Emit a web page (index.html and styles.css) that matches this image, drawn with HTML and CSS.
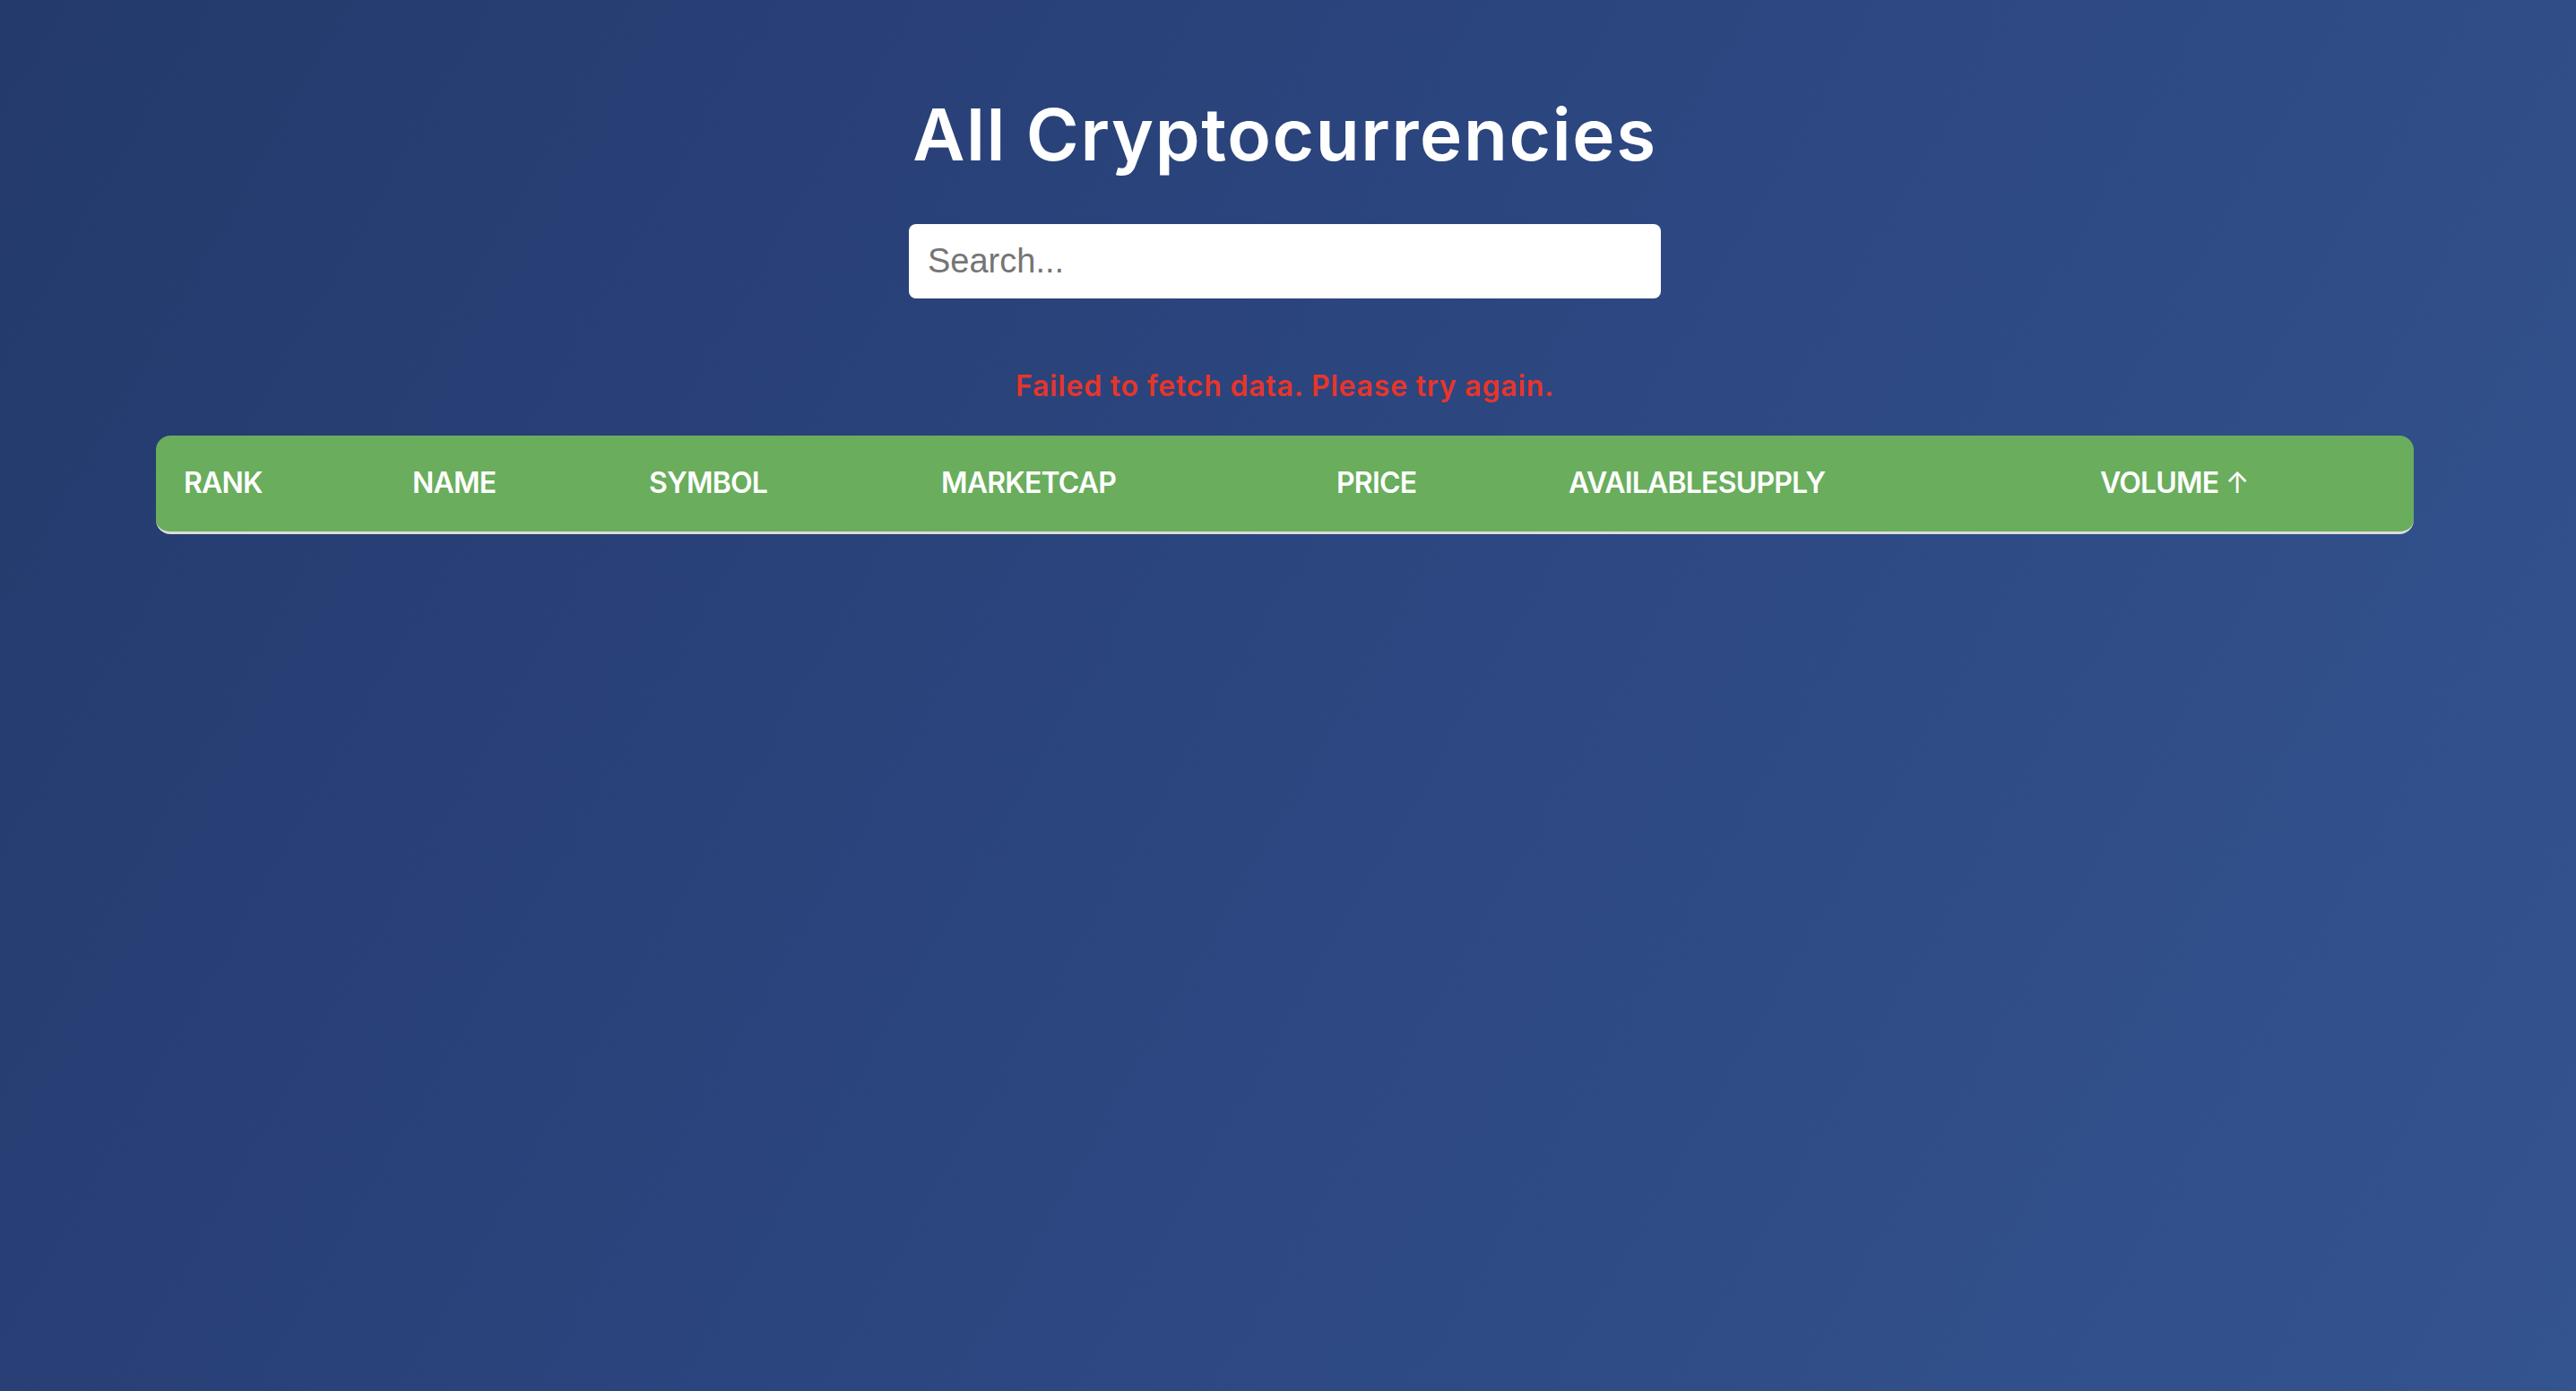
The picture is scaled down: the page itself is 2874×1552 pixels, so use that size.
FILE: index.html
```html
<!DOCTYPE html>
<html lang="en">
<head>
<meta charset="utf-8">
<title>All Cryptocurrencies</title>
<link rel="stylesheet" href="styles.css">
</head>
<body>
<main class="page">
  <h1 class="title">All Cryptocurrencies</h1>
  <input class="search" type="text" placeholder="Search...">
  <p class="error">Failed to fetch data. Please try again.</p>
  <table class="crypto-table">
    <colgroup>
      <col class="c-rank"><col class="c-name"><col class="c-symbol"><col class="c-cap"><col class="c-price"><col class="c-supply"><col class="c-volume">
    </colgroup>
    <thead>
      <tr>
        <th>RANK</th>
        <th>NAME</th>
        <th>SYMBOL</th>
        <th>MARKETCAP</th>
        <th>PRICE</th>
        <th>AVAILABLESUPPLY</th>
        <th>VOLUME <span class="arrow">↑</span></th>
      </tr>
    </thead>
    <tbody></tbody>
  </table>
</main>
</body>
</html>
```

FILE: styles.css
```css
html, body {
  margin: 0;
  padding: 0;
  height: 100%;
}
body {
  background: linear-gradient(120deg, #243a6c 0%, #2c4680 50%, #34548f 100%);
  font-family: Inter, "Noto Sans", sans-serif;
  color: #fff;
}
.page {
  display: flex;
  flex-direction: column;
  align-items: center;
  min-height: 100%;
  box-sizing: border-box;
  padding-top: 110px;
  padding-right: 7px;
}
.title {
  margin: 0;
  font-size: 80px;
  line-height: 80px;
  font-weight: 600;
  letter-spacing: 1.6px;
}
.search {
  margin-top: 60px;
  width: 839px;
  height: 83px;
  box-sizing: border-box;
  border: none;
  border-radius: 8px;
  padding: 0 21px;
  font-family: "Liberation Sans", Arial, sans-serif;
  font-size: 38px;
  color: #333;
  background: #fff;
  outline: none;
}
.search::placeholder {
  color: #757575;
}
.error {
  margin: 82px 0 0;
  font-size: 32px;
  line-height: 32px;
  font-weight: 600;
  letter-spacing: 0.8px;
  color: #e8352a;
}
.crypto-table {
  margin-top: 39px;
  width: 2519px;
  table-layout: fixed;
  border-collapse: separate;
  border-spacing: 0;
}
.c-rank { width: 255px; }
.c-name { width: 264px; }
.c-symbol { width: 326px; }
.c-cap { width: 441px; }
.c-price { width: 259px; }
.c-supply { width: 593px; }
.c-volume { width: 381px; }
.crypto-table th {
  background: #69ad5d;
  color: #fff;
  text-align: left;
  font-size: 32px;
  line-height: 32px;
  font-weight: 600;
  letter-spacing: -0.8px;
  padding: 37px 31px 38px;
  border-bottom: 3px solid #dcdcdc;
  white-space: nowrap;
}
.crypto-table th:first-child {
  border-top-left-radius: 16px;
  border-bottom-left-radius: 16px;
}
.crypto-table th:last-child {
  border-top-right-radius: 16px;
  border-bottom-right-radius: 16px;
}
.arrow {
  font-weight: 400;
  letter-spacing: 0;
}
```
